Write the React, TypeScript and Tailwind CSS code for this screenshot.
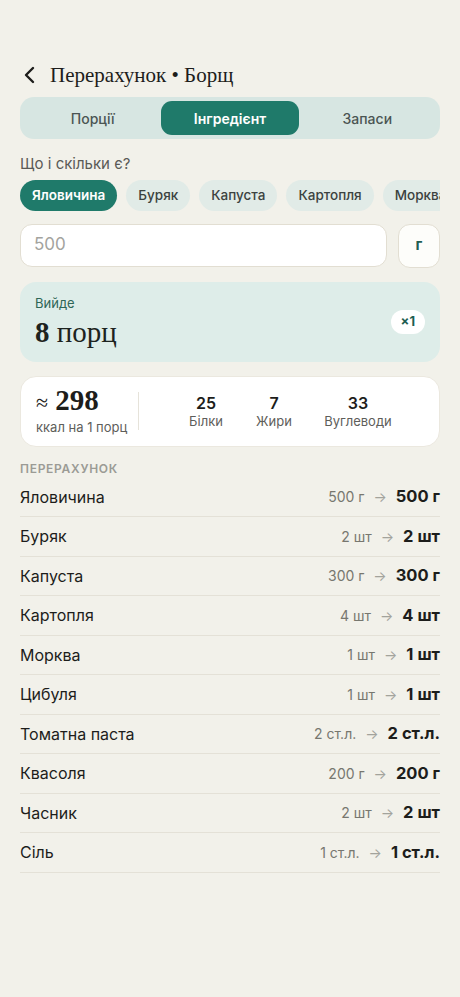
const sans = { fontFamily: "Inter, 'Noto Sans', sans-serif" };

type Row = { name: string; from: string; to: string };

const rows: Row[] = [
  { name: "Яловичина", from: "500 г", to: "500 г" },
  { name: "Буряк", from: "2 шт", to: "2 шт" },
  { name: "Капуста", from: "300 г", to: "300 г" },
  { name: "Картопля", from: "4 шт", to: "4 шт" },
  { name: "Морква", from: "1 шт", to: "1 шт" },
  { name: "Цибуля", from: "1 шт", to: "1 шт" },
  { name: "Томатна паста", from: "2 ст.л.", to: "2 ст.л." },
  { name: "Квасоля", from: "200 г", to: "200 г" },
  { name: "Часник", from: "2 шт", to: "2 шт" },
  { name: "Сіль", from: "1 ст.л.", to: "1 ст.л." },
];

const chips = ["Яловичина", "Буряк", "Капуста", "Картопля", "Морква", "Цибуля"];

const tabs = ["Порції", "Інгредієнт", "Запаси"];

export default function App() {
  return (
    <div
      className="min-h-[997px] w-[460px] bg-[#f2f1ea] px-5 pt-[60px] text-[#1d1d1b]"
      style={sans}
    >
      {/* header */}
      <div className="flex h-[30px] items-center gap-[12px]">
        <svg width="16" height="18" viewBox="0 0 16 18" className="ml-[2px]">
          <path
            d="M11 2 L4 9 L11 16"
            fill="none"
            stroke="#1d1d1b"
            strokeWidth="2.4"
            strokeLinecap="round"
            strokeLinejoin="round"
          />
        </svg>
        <h1 className="text-[21px] leading-none font-['Liberation_Serif',serif]">
          Перерахунок • Борщ
        </h1>
      </div>

      {/* segmented */}
      <div className="mt-[7px] grid h-[42px] grid-cols-3 rounded-[14px] bg-[#d7e6e2] p-1">
        {tabs.map((t, i) => (
          <div
            key={t}
            className={
              i === 1
                ? "flex items-center justify-center rounded-[11px] bg-[#1f7a6a] text-[14px] font-semibold text-white"
                : "flex items-center justify-center text-[14px] font-medium text-[#4b5553]"
            }
          >
            {t}
          </div>
        ))}
      </div>

      <p className="mt-[14px] text-[15px] text-[#5a5a56]">Що і скільки є?</p>

      {/* chips */}
      <div className="mt-[4px] flex gap-[9px] overflow-x-auto overflow-y-hidden [scrollbar-width:none]">
        {chips.map((c, i) => (
          <div
            key={c}
            className={
              i === 0
                ? "flex h-[31px] shrink-0 items-center rounded-full bg-[#1f7a6a] px-[12px] text-[13.5px] font-semibold text-white"
                : "flex h-[31px] shrink-0 items-center rounded-full bg-[#e1ebe7] px-[12px] text-[13.5px] font-medium text-[#3b4240]"
            }
          >
            {c}
          </div>
        ))}
      </div>

      {/* input */}
      <div className="mt-[13px] flex gap-[11px]">
        <div className="flex h-[43px] flex-1 items-center rounded-[12px] border border-[#e2ded2] bg-white px-[13px] text-[17px] text-[#a3a39e]">
          500
        </div>
        <div className="flex h-[44px] w-[42px] items-center justify-center rounded-[12px] border border-[#e2ded2] bg-[#fdfdfa] text-[15px] font-bold text-[#1f5e52]">
          г
        </div>
      </div>

      {/* yield */}
      <div className="mt-[14px] flex h-[80px] items-center justify-between rounded-[16px] bg-[#deede9] pl-[15px] pr-[15px]">
        <div>
          <div className="text-[13px] text-[#2e6656]">Вийде</div>
          <div className="mt-[1px] font-['Liberation_Serif',serif] text-[29px] leading-[34px] text-[#1d2320]">
            <span className="font-bold">8</span> порц
          </div>
        </div>
        <div className="flex h-[24px] items-center rounded-full bg-white px-[10px] text-[13px] font-bold text-[#1f5e52]">
          ×1
        </div>
      </div>

      {/* nutrition */}
      <div className="mt-[14px] flex h-[71px] items-center rounded-[16px] border border-[#ebe8df] bg-white px-[15px]">
        <div className="w-[102px]">
          <div className="font-['Liberation_Serif',serif] text-[29px] leading-[30px] text-[#1d1d1b]">
            <span className="text-[22px]">≈</span> <span className="font-bold">298</span>
          </div>
          <div className="text-[13px] text-[#5e5e5a]">ккал на 1 порц</div>
        </div>
        <div className="h-[38px] w-px bg-[#e6e3da]" />
        <div className="flex flex-1 items-center">
          <Stat n="25" l="Білки" w="ml-[37px] w-[60px]" />
          <Stat n="7" l="Жири" w="w-[76px]" />
          <Stat n="33" l="Вуглеводи" w="w-[92px]" />
        </div>
      </div>

      {/* list */}
      <div className="mt-[13px] text-[12px] font-semibold tracking-[0.06em] text-[#9b9b95]">
        ПЕРЕРАХУНОК
      </div>
      <div>
        {rows.map((r) => (
          <div
            key={r.name}
            className="flex h-[39.5px] items-center justify-between border-b border-[#e4e1d7]"
          >
            <span className="text-[16px] text-[#1d1d1b]">{r.name}</span>
            <span className="flex items-center">
              <span className="text-[14px] text-[#77776f]">{r.from}</span>
              <span className="mx-[9px] text-[14px] text-[#a3a39c]">→</span>
              <span className="text-[16.5px] font-bold text-[#1d1d1b]">{r.to}</span>
            </span>
          </div>
        ))}
      </div>
    </div>
  );
}

function Stat({ n, l, w }: { n: string; l: string; w: string }) {
  return (
    <div className={`flex flex-col items-center ${w}`}>
      <div className="text-[16px] leading-[20px] font-semibold text-[#1d1d1b]">{n}</div>
      <div className="text-[13px] leading-[17px] text-[#5e5e5a]">{l}</div>
    </div>
  );
}
